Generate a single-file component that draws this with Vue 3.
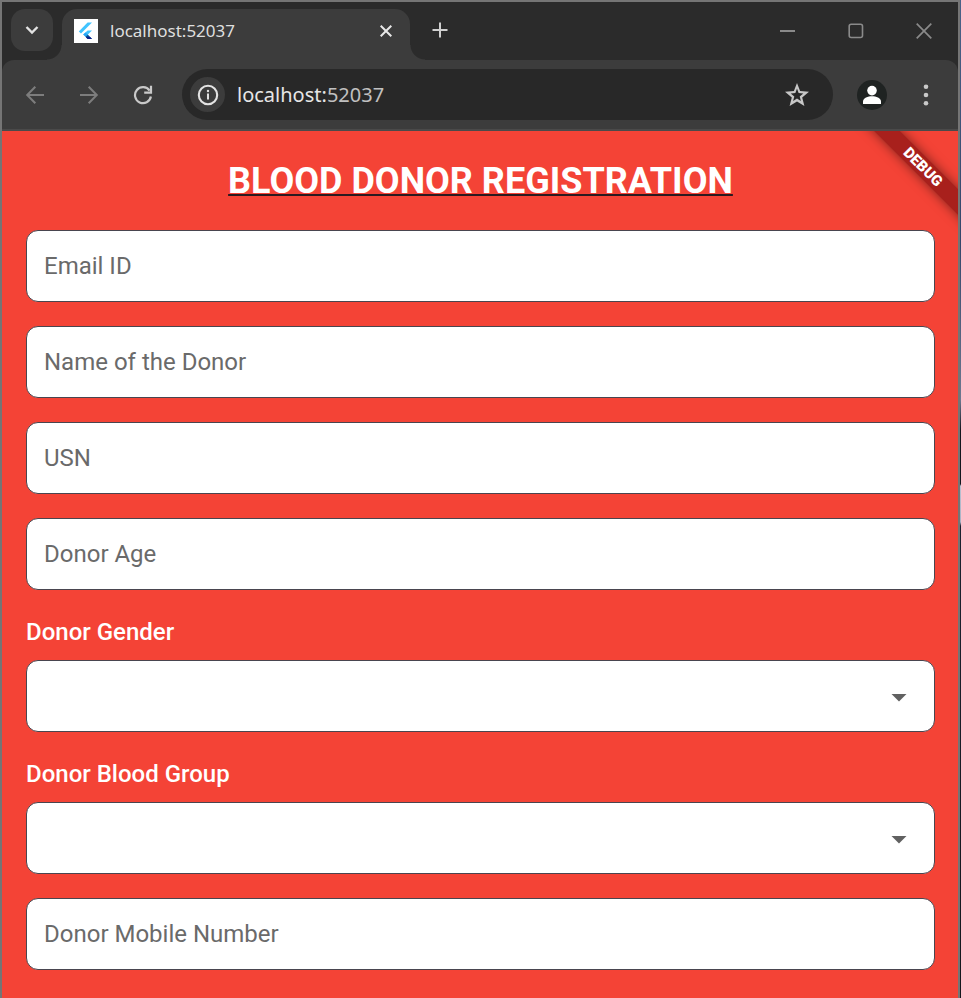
<script setup>
import { reactive } from 'vue'

const form = reactive({
  email: '', name: '', usn: '', age: '', gender: '', bloodGroup: '', mobile: '',
})

const fields = [
  { id: 'email', label: 'Email ID', type: 'email' },
  { id: 'name', label: 'Name of the Donor', type: 'text' },
  { id: 'usn', label: 'USN', type: 'text' },
  { id: 'age', label: 'Donor Age', type: 'text' },
  { id: 'gender', label: 'Donor Gender', options: ['Male', 'Female', 'Other'] },
  { id: 'bloodGroup', label: 'Donor Blood Group', options: ['A+', 'A-', 'B+', 'B-', 'AB+', 'AB-', 'O+', 'O-'] },
  { id: 'mobile', label: 'Donor Mobile Number', type: 'tel' },
]
</script>

<template>
  <div class="desktop">
    <div class="window">
      <header class="tabstrip">
        <button class="tab-search" type="button" aria-label="Search tabs">
          <svg width="14" height="10" viewBox="0 0 14 10"><path d="M1.5 2 L7 7.5 L12.5 2" fill="none" stroke="#e3e3e3" stroke-width="2.4" /></svg>
        </button>
        <div class="tab">
          <svg class="favicon" width="24" height="24" viewBox="0 0 24 24">
            <rect width="24" height="24" fill="#fff" />
            <path d="M4.8 12.4 L13.6 3.4 H18 L7 14.6 Z" fill="#40c4ff" />
            <path d="M13.6 11.4 H18 L11.6 17.8 L9.2 15.6 Z" fill="#40c4ff" />
            <path d="M9.2 15.6 L11.4 13.4 L13.8 15.6 L11.6 17.8 Z" fill="#29a5f5" />
            <path d="M11.6 17.8 L13.8 15.6 L18 20 H13.6 Z" fill="#01579b" />
            <path d="M11.6 17.8 H15.9 L18 20 H13.6 Z" fill="#0b1f8a" />
          </svg>
          <span class="tab-title">localhost:52037</span>
          <button class="tab-close" type="button" aria-label="Close tab">
            <svg width="12" height="12" viewBox="0 0 12 12"><path d="M.7 .7 L11.3 11.3 M11.3 .7 L.7 11.3" stroke="#e8e8e8" stroke-width="2" /></svg>
          </button>
        </div>
        <button class="new-tab" type="button" aria-label="New tab">
          <svg width="16" height="16" viewBox="0 0 16 16"><path d="M8 .5 V15.5 M.5 8 H15.5" stroke="#d0d0d0" stroke-width="2" /></svg>
        </button>
        <div class="window-controls">
          <button type="button" aria-label="Minimize"><svg width="16" height="16" viewBox="0 0 16 16"><path d="M0 8 H15" stroke="#8a8a8a" stroke-width="2" /></svg></button>
          <button type="button" aria-label="Maximize"><svg width="16" height="16" viewBox="0 0 16 16"><rect x="1.2" y="1.2" width="13.3" height="13.3" rx="2" fill="none" stroke="#8a8a8a" stroke-width="1.6" /></svg></button>
          <button type="button" aria-label="Close"><svg width="16" height="16" viewBox="0 0 16 16"><path d="M.7 .7 L15.3 15.3 M15.3 .7 L.7 15.3" stroke="#8a8a8a" stroke-width="1.7" /></svg></button>
        </div>
      </header>

      <nav class="toolbar">
        <div class="nav-buttons">
          <button type="button" aria-label="Back"><svg width="20" height="20" viewBox="0 0 20 20"><path d="M19 10 H2.5 M10.3 1.8 L2.2 10 L10.3 18.2" fill="none" stroke="#7d7d7d" stroke-width="2" /></svg></button>
          <button type="button" aria-label="Forward"><svg width="20" height="20" viewBox="0 0 20 20"><path d="M1 10 H17.5 M9.7 1.8 L17.8 10 L9.7 18.2" fill="none" stroke="#7d7d7d" stroke-width="2" /></svg></button>
          <button type="button" aria-label="Reload"><svg width="20" height="20" viewBox="0 0 20 20"><path d="M17.9 11.5 A8 8 0 1 1 16.6 5.6" fill="none" stroke="#c9c9c9" stroke-width="2.2" /><path d="M18 .8 V7.6 H11.2" fill="none" stroke="#c9c9c9" stroke-width="2.2" /></svg></button>
        </div>
        <div class="address">
          <button class="site-info" type="button" aria-label="View site information">
            <svg width="22" height="22" viewBox="0 0 22 22"><circle cx="11" cy="11" r="9.2" fill="none" stroke="#e3e3e3" stroke-width="2.1" /><path d="M11 9.6 V15.6" stroke="#e3e3e3" stroke-width="2" /><circle cx="11" cy="7" r="1.2" fill="#e3e3e3" /></svg>
          </button>
          <span class="url">localhost:<span class="port">52037</span></span>
          <button class="bookmark" type="button" aria-label="Bookmark this tab">
            <svg width="24" height="24" viewBox="0 0 24 24"><path fill="#c7c7c7" fill-rule="evenodd" d="M12 0 L15.1 8.1 L24 8.8 L17.2 14.6 L19.4 23 L12 18.4 L4.6 23 L6.8 14.6 L0 8.8 L8.9 8.1 Z M12 5.6 L10.4 10 L5.7 10.4 L9.3 13.5 L8.1 18.1 L12 15.6 L15.9 18.1 L14.7 13.5 L18.3 10.4 L13.6 10 Z" /></svg>
          </button>
        </div>
        <button class="profile" type="button" aria-label="Profile">
          <svg width="30" height="30" viewBox="0 0 30 30"><circle cx="15" cy="15" r="15" fill="#1f2322" /><circle cx="15" cy="10.6" r="4.8" fill="#fff" /><path d="M6 24 V21.5 C6 18 11 16.2 15 16.2 S24 18 24 21.5 V24 Z" fill="#fff" /></svg>
        </button>
        <button class="menu" type="button" aria-label="Menu">
          <svg width="6" height="22" viewBox="0 0 6 22"><g fill="#c9c9c9"><circle cx="3" cy="2.7" r="2.3" /><circle cx="3" cy="11" r="2.3" /><circle cx="3" cy="19.3" r="2.3" /></g></svg>
        </button>
      </nav>

      <main class="page">
        <span class="debug">DEBUG</span>
        <h1>BLOOD DONOR REGISTRATION</h1>
        <form @submit.prevent>
          <template v-for="f in fields" :key="f.id">
            <div v-if="f.options" class="group">
              <label :for="f.id">{{ f.label }}</label>
              <div class="select-box">
                <select :id="f.id" v-model="form[f.id]" class="control">
                  <option value=""></option>
                  <option v-for="o in f.options" :key="o">{{ o }}</option>
                </select>
                <svg class="caret" width="16" height="8" viewBox="0 0 16 8"><path d="M.5 0 H15.5 L8 7.6 Z" fill="#616161" /></svg>
              </div>
            </div>
            <input v-else :id="f.id" v-model="form[f.id]" class="control" :type="f.type" :placeholder="f.label" :aria-label="f.label">
          </template>
        </form>
      </main>
    </div>
  </div>
</template>

<style>
body {
  background: #f44336;
}
</style>

<style scoped>
.desktop,
.desktop * {
  box-sizing: border-box;
}
.desktop {
  min-height: 100vh;
  display: flex;
  padding-right: 1px;
  background: linear-gradient(#4a6288 0, #34466b 240px, #6d7890 400px, #14161e 430px, #14161e 484px, #b9c2d2 486px, #a9b2c4 522px, #1c2230 526px, #15171d 100%);
}
.window {
  flex: 1;
  min-width: 0;
  display: flex;
  flex-direction: column;
  border: 2px solid #757575;
  border-bottom: 0;
  background: #2b2b2b;
}
button {
  display: flex;
  align-items: center;
  justify-content: center;
  flex: none;
  padding: 0;
  border: 0;
  background: none;
}
svg {
  display: block;
  flex: none;
}
.tabstrip {
  display: flex;
  height: 58px;
  padding: 7px 0 0 9px;
  font-family: "Noto Sans", "Open Sans", sans-serif;
}
.tab-search {
  width: 42px;
  height: 42px;
  border-radius: 14px;
  background: #3c3c3c;
}
.tab {
  position: relative;
  display: flex;
  align-items: center;
  flex: 0 1 348px;
  min-width: 0;
  margin-left: 9px;
  padding: 0 18px 8px 12px;
  border-radius: 15px 15px 0 0;
  background: #3c3c3c;
}
.tab::before,
.tab::after {
  content: "";
  position: absolute;
  bottom: 0;
  width: 15px;
  height: 15px;
}
.tab::before {
  right: 100%;
  background: radial-gradient(circle at 0 0, transparent 14px, #3c3c3c 15px);
}
.tab::after {
  left: 100%;
  background: radial-gradient(circle at 100% 0, transparent 14px, #3c3c3c 15px);
}
.tab-title {
  flex: 1;
  margin-left: 12px;
  overflow: hidden;
  white-space: nowrap;
  font-size: 17px;
  line-height: 24px;
  color: #dfdfdf;
}
.new-tab {
  width: 42px;
  height: 42px;
  margin-left: 9px;
}
.window-controls {
  display: flex;
  margin-left: auto;
}
.window-controls button {
  width: 68px;
  height: 44px;
}
.toolbar {
  display: flex;
  align-items: center;
  height: 71px;
  padding: 0 14px 0 15px;
  border-bottom: 2px solid #4a4a4a;
  border-radius: 12px 12px 0 0;
  background: #3c3c3c;
}
.nav-buttons {
  display: flex;
  gap: 18px;
}
.nav-buttons button,
.menu {
  width: 36px;
  height: 36px;
}
.address {
  flex: 1;
  min-width: 0;
  display: flex;
  align-items: center;
  height: 51px;
  margin: 0 24px 0 21px;
  padding: 0 24px 0 8px;
  border-radius: 26px;
  background: #282828;
}
.site-info {
  width: 35px;
  height: 35px;
  border-radius: 50%;
  background: #3c3c3c;
}
.url {
  flex: 1;
  margin-left: 12px;
  font: 20px/28px "Noto Sans", "Open Sans", sans-serif;
  color: #e6e6e6;
}
.port {
  color: #c0c0c0;
}
.menu {
  margin-left: 21px;
}
.page {
  position: relative;
  flex: 1;
  overflow: hidden;
  padding: 24px 23px 28px 24px;
  background: #f44336;
  font-family: Roboto, sans-serif;
}
h1 {
  margin: 0 0 23px;
  font-size: 36px;
  line-height: 52px;
  font-weight: 700;
  text-align: center;
  color: #fff;
  text-decoration: underline #2b1a20 2px;
  text-decoration-skip-ink: none;
  text-underline-offset: 1px;
}
form {
  display: flex;
  flex-direction: column;
  gap: 24px;
}
.group {
  display: flex;
  flex-direction: column;
  gap: 10px;
}
label {
  font-size: 24px;
  line-height: 36px;
  font-weight: 500;
  color: #fff;
}
.control {
  display: block;
  width: 100%;
  height: 72px;
  margin: 0;
  padding: 0 17px;
  border: 1px solid #49454f;
  border-radius: 12px;
  outline: 0;
  background: #fff;
  font: 24px/36px Roboto, sans-serif;
  color: #212121;
  appearance: none;
}
.control::placeholder {
  color: #6a6a6a;
  opacity: 1;
}
.select-box {
  position: relative;
}
.caret {
  position: absolute;
  top: 34px;
  right: 28px;
  pointer-events: none;
}
.debug {
  position: absolute;
  top: 27px;
  right: -45px;
  width: 160px;
  transform: rotate(45deg);
  background: #a8201c;
  box-shadow: 0 0 12px rgba(0, 0, 0, 0.5);
  font-size: 15px;
  line-height: 18px;
  font-weight: 900;
  text-align: center;
  color: #fff;
}
</style>
